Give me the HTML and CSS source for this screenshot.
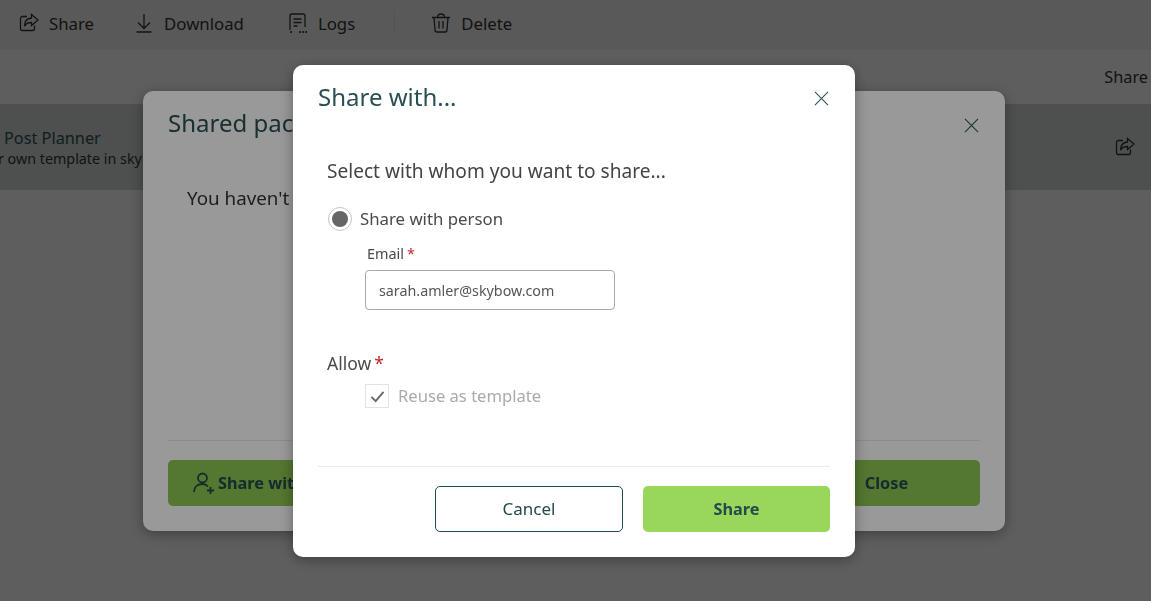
FILE: index.html
```html
<!DOCTYPE html>
<html lang="en">
<head>
<meta charset="utf-8">
<title>Share with</title>
<link rel="stylesheet" href="styles.css">
</head>
<body>
<div class="page">
  <div class="toolbar">
    <div class="tool tool-share">
      <svg class="ico" viewBox="0 0 20 20"><path d="M8 3.500H3.500a2 2 0 0 0-2 2v10a2 2 0 0 0 2 2h10a2 2 0 0 0 2-2v-3"/><path d="M12.500 1.500l6.500 5.500-6.500 5.500V9.500c-3.500 0-5.500 1-7 3.800 0-5 2.500-8 7-8.300z"/></svg>
      <span>Share</span>
    </div>
    <div class="tool tool-download">
      <svg class="ico" viewBox="0 0 20 20"><path d="M10 1v14M4 9.500l6 6 6-6M2.500 19h15"/></svg>
      <span>Download</span>
    </div>
    <div class="tool tool-logs">
      <svg class="ico" viewBox="0 0 20 20"><path d="M2 17V3a2 2 0 0 1 2-2h11a2 2 0 0 1 2 2v11M5.500 6h8M5.500 9.500h8M5.500 13h4"/><path class="dots" d="M3 19h.1M12 19h.1M15 19h.1M18 19h.1"/></svg>
      <span>Logs</span>
    </div>
    <div class="tool-sep"></div>
    <div class="tool">
      <svg class="ico" viewBox="0 0 20 20"><path d="M1 4.500h18M6.500 4.500c0-2 1-3.500 3.500-3.500s3.500 1.500 3.500 3.500M3 4.500l1 12.500a2 2 0 0 0 2 2h8a2 2 0 0 0 2-2l1-12.500M8 8v7.500M12 8v7.500"/></svg>
      <span>Delete</span>
    </div>
  </div>
  <div class="subhead"><span>Share</span></div>
  <div class="row">
    <div class="row-text">
      <div class="row-title">Post Planner</div>
      <div class="row-sub">r own template in skybow</div>
    </div>
    <svg class="row-ico" viewBox="0 0 20 20"><path d="M8 3.500H3.500a2 2 0 0 0-2 2v10a2 2 0 0 0 2 2h10a2 2 0 0 0 2-2v-3"/><path d="M12.500 1.500l6.500 5.500-6.500 5.500V9.500c-3.500 0-5.500 1-7 3.800 0-5 2.500-8 7-8.300z"/></svg>
  </div>
</div>

<div class="overlay overlay-page"></div>

<section class="dialog dialog-back">
  <header class="dlg-head">
    <h2>Shared packages</h2>
    <svg class="close close-back" viewBox="0 0 16 16"><path d="M1 1l14 14M15 1L1 15"/></svg>
  </header>
  <p class="back-body">You haven't shared any packages yet.</p>
  <footer class="back-foot">
    <button class="btn btn-back btn-with">
      <svg class="person" viewBox="0 0 22 22"><circle cx="9.500" cy="6" r="4.500"/><path d="M1 20c0-5 3.500-8 8.500-8 2.500 0 4 .8 5.500 2.500"/><path d="M14 18.500h7M17.500 15v7"/></svg>
      <span>Share with</span>
    </button>
    <button class="btn btn-back">Close</button>
  </footer>
</section>

<div class="overlay overlay-dialog"></div>

<section class="dialog dialog-front">
  <header class="dlg-head">
    <h2>Share with...</h2>
    <svg class="close" viewBox="0 0 16 16"><path d="M1 1l14 14M15 1L1 15"/></svg>
  </header>
  <div class="front-body">
    <p class="lead">Select with whom you want to share...</p>
    <div class="radio-row">
      <span class="radio"><span class="radio-dot"></span></span>
      <span class="radio-label">Share with person</span>
    </div>
    <div class="field">
      <div class="field-label">Email<span class="req">*</span></div>
      <input class="text-input" type="text" value="sarah.amler@skybow.com">
    </div>
    <div class="allow-label">Allow<span class="req">*</span></div>
    <div class="check-row">
      <span class="check">
        <svg viewBox="0 0 16 14"><path d="M1.500 7.500l4.500 4.500L14.500 2"/></svg>
      </span>
      <span class="check-label">Reuse as template</span>
    </div>
  </div>
  <footer class="front-foot">
    <button class="btn btn-outline">Cancel</button>
    <button class="btn btn-green">Share</button>
  </footer>
</section>
</body>
</html>
```
FILE: styles.css
```css
* { box-sizing: border-box; }
html, body { margin: 0; height: 100%; overflow: hidden; }
body {
  font-family: "Noto Sans", "Open Sans", sans-serif;
  background: #fff;
  color: #333;
}
.page { width: 1151px; height: 601px; background: #fff; }
.toolbar {
  height: 50px;
  display: flex;
  align-items: center;
  padding: 0 0 4px 19px;
  background: #f2f2f2;
  font-size: 16.800px;
  color: #333;
}
.tool { display: flex; align-items: center; gap: 10px; }
.tool-share { margin-right: 40px; }
.tool-download { margin-right: 44px; }
.tool-sep { width: 1px; height: 24px; background: #e0e0e0; margin: 0 36px 0 39px; }
.ico { width: 20px; height: 20px; fill: none; stroke: #333; stroke-width: 1.300; }
.ico .dots { stroke-width: 2; stroke-linecap: round; }
.subhead {
  height: 54px;
  display: flex;
  align-items: center;
  justify-content: flex-end;
  padding: 0 3px 0 0;
  font-size: 16.300px;
}
.row {
  height: 86px;
  background: #d2d9d6;
  display: flex;
  align-items: center;
  justify-content: space-between;
  padding: 0 16px 0 0;
}
.row-text { padding: 2px 0 0 4px; }
.row-title { font-size: 16.300px; line-height: 22px; color: #2e5152; }
.row-sub { font-size: 14.300px; line-height: 20px; color: #333; margin-left: -6px; }
.row-ico { width: 20px; height: 20px; fill: none; stroke: #333; stroke-width: 1.300; }

.overlay { position: fixed; inset: 0; }
.overlay-page { background: rgba(0,0,0,.39); }
.overlay-dialog { background: rgba(0,0,0,.4); }

.dialog {
  position: fixed;
  background: #fff;
  border-radius: 10px;
  display: flex;
  flex-direction: column;
  box-shadow: 0 3px 14px rgba(0,0,0,.35);
}
.dialog-back { left: 143px; top: 91px; width: 862px; height: 440px; padding: 0 25px 25px; }
.dialog-front { left: 293px; top: 65px; width: 562px; height: 492px; padding: 0 25px 25px; }
.dlg-head {
  display: flex;
  align-items: center;
  justify-content: space-between;
  color: #2a4f51;
  padding-top: 16px;
}
.dlg-head h2 { margin: 0; font-size: 24px; font-weight: 400; line-height: 32px; }
.close { width: 15px; height: 15px; margin: 3px 1px 0 0; fill: none; stroke: #2a4f51; stroke-width: 1.100; }
.close-back { margin-top: 5px; }
.back-body { margin: 46px 0 0 19px; font-size: 18.800px; line-height: 26px; color: #333; flex: 1; }
.back-foot {
  display: flex;
  justify-content: space-between;
  border-top: 1px solid #e8e8e8;
  padding-top: 19px;
}
.btn {
  font-family: inherit;
  font-size: 16.300px;
  height: 46px;
  width: 187px;
  border-radius: 5px;
  border: 0;
  color: #234a4c;
}
.btn-green { background: #98d75b; font-weight: 700; }
.btn-back { background: #8cc653; font-weight: 700; }
.btn-with { display: flex; align-items: center; padding: 0 0 0 25px; gap: 3px; white-space: nowrap; }
.person { width: 22px; height: 22px; flex: none; fill: none; stroke: #234a4c; stroke-width: 1.800; }
.btn-outline { background: #fff; border: 1px solid #234a4c; width: 188px; padding-bottom: 2px; font-size: 17px; font-weight: 400; }

.front-body { flex: 1; padding: 0 9px; }
.lead { margin: 44px 0 0; font-size: 19.100px; line-height: 28px; color: #444; }
.radio-row { display: flex; align-items: center; gap: 8px; margin: 22px 0 0 1px; }
.radio {
  width: 24px; height: 24px;
  border: 1px solid #c4c4c4;
  border-radius: 50%;
  display: flex; align-items: center; justify-content: center;
}
.radio-dot { width: 16px; height: 16px; border-radius: 50%; background: #666; }
.radio-label { font-size: 16.800px; color: #4a4a4a; line-height: 24px; }
.field { margin: 13px 0 0 38px; }
.field-label { padding-left: 2px; font-size: 14.400px; line-height: 20px; color: #4a4a4a; }
.req { color: #c4262e; margin-left: 3px; }
.text-input {
  display: block;
  width: 250px; height: 40px;
  margin-top: 6px;
  padding: 0 13px;
  border: 1px solid #a8a8a8;
  border-radius: 4px;
  font-family: inherit;
  font-size: 14.300px;
  color: #555;
  background: #fff;
}
.allow-label { margin-top: 41px; font-size: 17.500px; line-height: 24px; color: #4a4a4a; }
.check-row { display: flex; align-items: center; gap: 9px; margin: 9px 0 0 38px; }
.check {
  width: 24px; height: 24px;
  border: 1px solid #e2e2e2;
  display: flex; align-items: center; justify-content: center;
}
.check svg { width: 15px; height: 13px; fill: none; stroke: #666; stroke-width: 2; }
.check-label { font-size: 16.600px; color: #aaa; line-height: 24px; }
.front-foot {
  display: flex;
  justify-content: flex-end;
  gap: 20px;
  border-top: 1px solid #ececec;
  padding-top: 19px;
}
```
